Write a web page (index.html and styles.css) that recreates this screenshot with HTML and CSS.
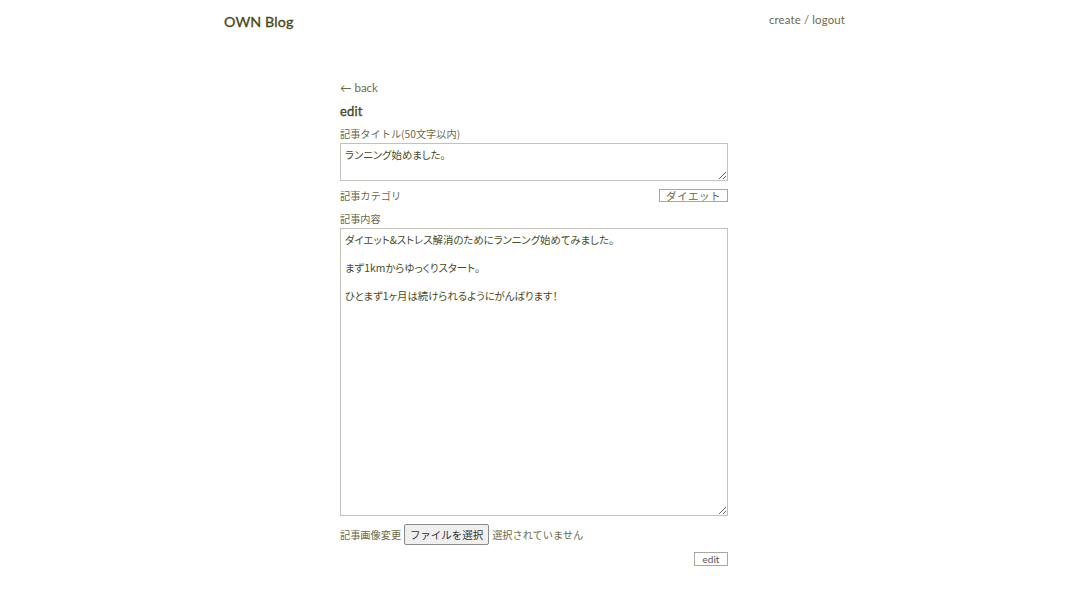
FILE: index.html
```html
<!DOCTYPE html>
<html lang="ja">
<head>
<meta charset="utf-8">
<title>OWN Blog</title>
<link rel="stylesheet" href="styles.css">
</head>
<body>
<header class="site-header">
  <a class="logo" href="#">OWN Blog</a>
  <nav class="nav"><a href="#">create</a> / <a href="#">logout</a></nav>
</header>
<main class="main">
  <a class="back" href="#">← back</a>
  <h1 class="title">edit</h1>
  <form class="form">
    <label class="label">記事タイトル(50文字以内)</label>
    <textarea class="input input-title">ランニング始めました。</textarea>
    <div class="row-between">
      <span class="label-inline">記事カテゴリ</span>
      <span class="select">ダイエット</span>
    </div>
    <label class="label">記事内容</label>
    <textarea class="input input-body">ダイエット&amp;ストレス解消のためにランニング始めてみました。

まず1kmからゆっくりスタート。

ひとまず1ヶ月は続けられるようにがんばります！</textarea>
    <div class="file-row">
      <span class="label-inline">記事画像変更</span>
      <span class="file-btn">ファイルを選択</span>
      <span class="file-none">選択されていません</span>
    </div>
    <div class="submit-row">
      <span class="submit">edit</span>
    </div>
  </form>
</main>
</body>
</html>
```
FILE: styles.css
```css
html, body {
  margin: 0;
  padding: 0;
  background: #ffffff;
}
body {
  font-family: "Lato", "Noto Sans CJK JP", sans-serif;
  color: #4f4f22;
}
a {
  text-decoration: none;
  color: inherit;
}
.site-header {
  display: flex;
  justify-content: space-between;
  align-items: flex-start;
  width: 621px;
  margin-left: calc(50% - 316px);
  padding-top: 12px;
  height: 40px;
  box-sizing: border-box;
}
.logo {
  font-size: 14.3px;
  font-weight: 400;
  -webkit-text-stroke: 0.35px #4a4a1a;
  color: #4a4a1a;
  line-height: 20px;
  letter-spacing: 0.1px;
}
.nav {
  font-size: 11.4px;
  color: #6b6b4c;
  line-height: 16px;
  margin-top: 0;
  letter-spacing: 0.15px;
}
.main {
  width: 388px;
  margin-left: calc(50% - 200px);
  padding-top: 40px;
}
.back {
  display: block;
  font-size: 11.5px;
  color: #6b6b4c;
  line-height: 16px;
}
.title {
  font-size: 13px;
  font-weight: 400;
  -webkit-text-stroke: 0.35px #4a4a1a;
  color: #4a4a1a;
  margin: 6px 0 7px;
  line-height: 18px;
  letter-spacing: 0.2px;
}
.form {
  display: flex;
  flex-direction: column;
}
.label {
  display: block;
  font-family: "Noto Sans CJK JP", sans-serif;
  font-size: 10.2px;
  color: #6b6b4c;
  line-height: 14px;
  margin-bottom: 2px;
}
.label-inline {
  font-family: "Noto Sans CJK JP", sans-serif;
  font-size: 10.2px;
  color: #6b6b4c;
}
.input {
  display: block;
  width: 388px;
  box-sizing: border-box;
  border: 1px solid #c2c2ba;
  background: #fff;
  font-family: "Noto Sans CJK JP", sans-serif;
  font-size: 10.4px;
  font-feature-settings: "palt";
  line-height: 14px;
  color: #4a4a1a;
  padding: 4px 4px 3px;
  margin: 0;
  resize: vertical;
}
.input-title {
  height: 38px;
}
.input-body {
  height: 288px;
  padding-top: 4px;
}
.row-between {
  display: flex;
  justify-content: space-between;
  align-items: center;
  height: 14px;
  margin: 7px 0 10px;
}
.select {
  display: inline-block;
  width: 69px;
  height: 13px;
  box-sizing: border-box;
  border: 1px solid #a8a8a0;
  font-family: "Noto Sans CJK JP", sans-serif;
  font-size: 10.5px;
  line-height: 11px;
  color: #66664a;
  text-align: center;
  letter-spacing: 0.5px;
}
.file-row {
  display: flex;
  align-items: center;
  gap: 3px;
  margin-top: 7px;
  height: 22px;
}
.file-btn {
  display: inline-block;
  box-sizing: border-box;
  height: 21px;
  width: 85px;
  border: 1px solid #8a8a86;
  border-radius: 2px;
  background: #efefef;
  font-family: "Noto Sans CJK JP", sans-serif;
  font-size: 10.5px;
  line-height: 19px;
  color: #333;
  text-align: center;
}
.file-none {
  font-family: "Noto Sans CJK JP", sans-serif;
  font-size: 10.2px;
  color: #6b6b4c;
}
.submit-row {
  display: flex;
  justify-content: flex-end;
  margin-top: 7px;
}
.submit {
  display: inline-block;
  box-sizing: border-box;
  width: 34px;
  height: 14px;
  border: 1px solid #a8a8a0;
  font-size: 10px;
  line-height: 12px;
  text-align: center;
  color: #555;
}
```
